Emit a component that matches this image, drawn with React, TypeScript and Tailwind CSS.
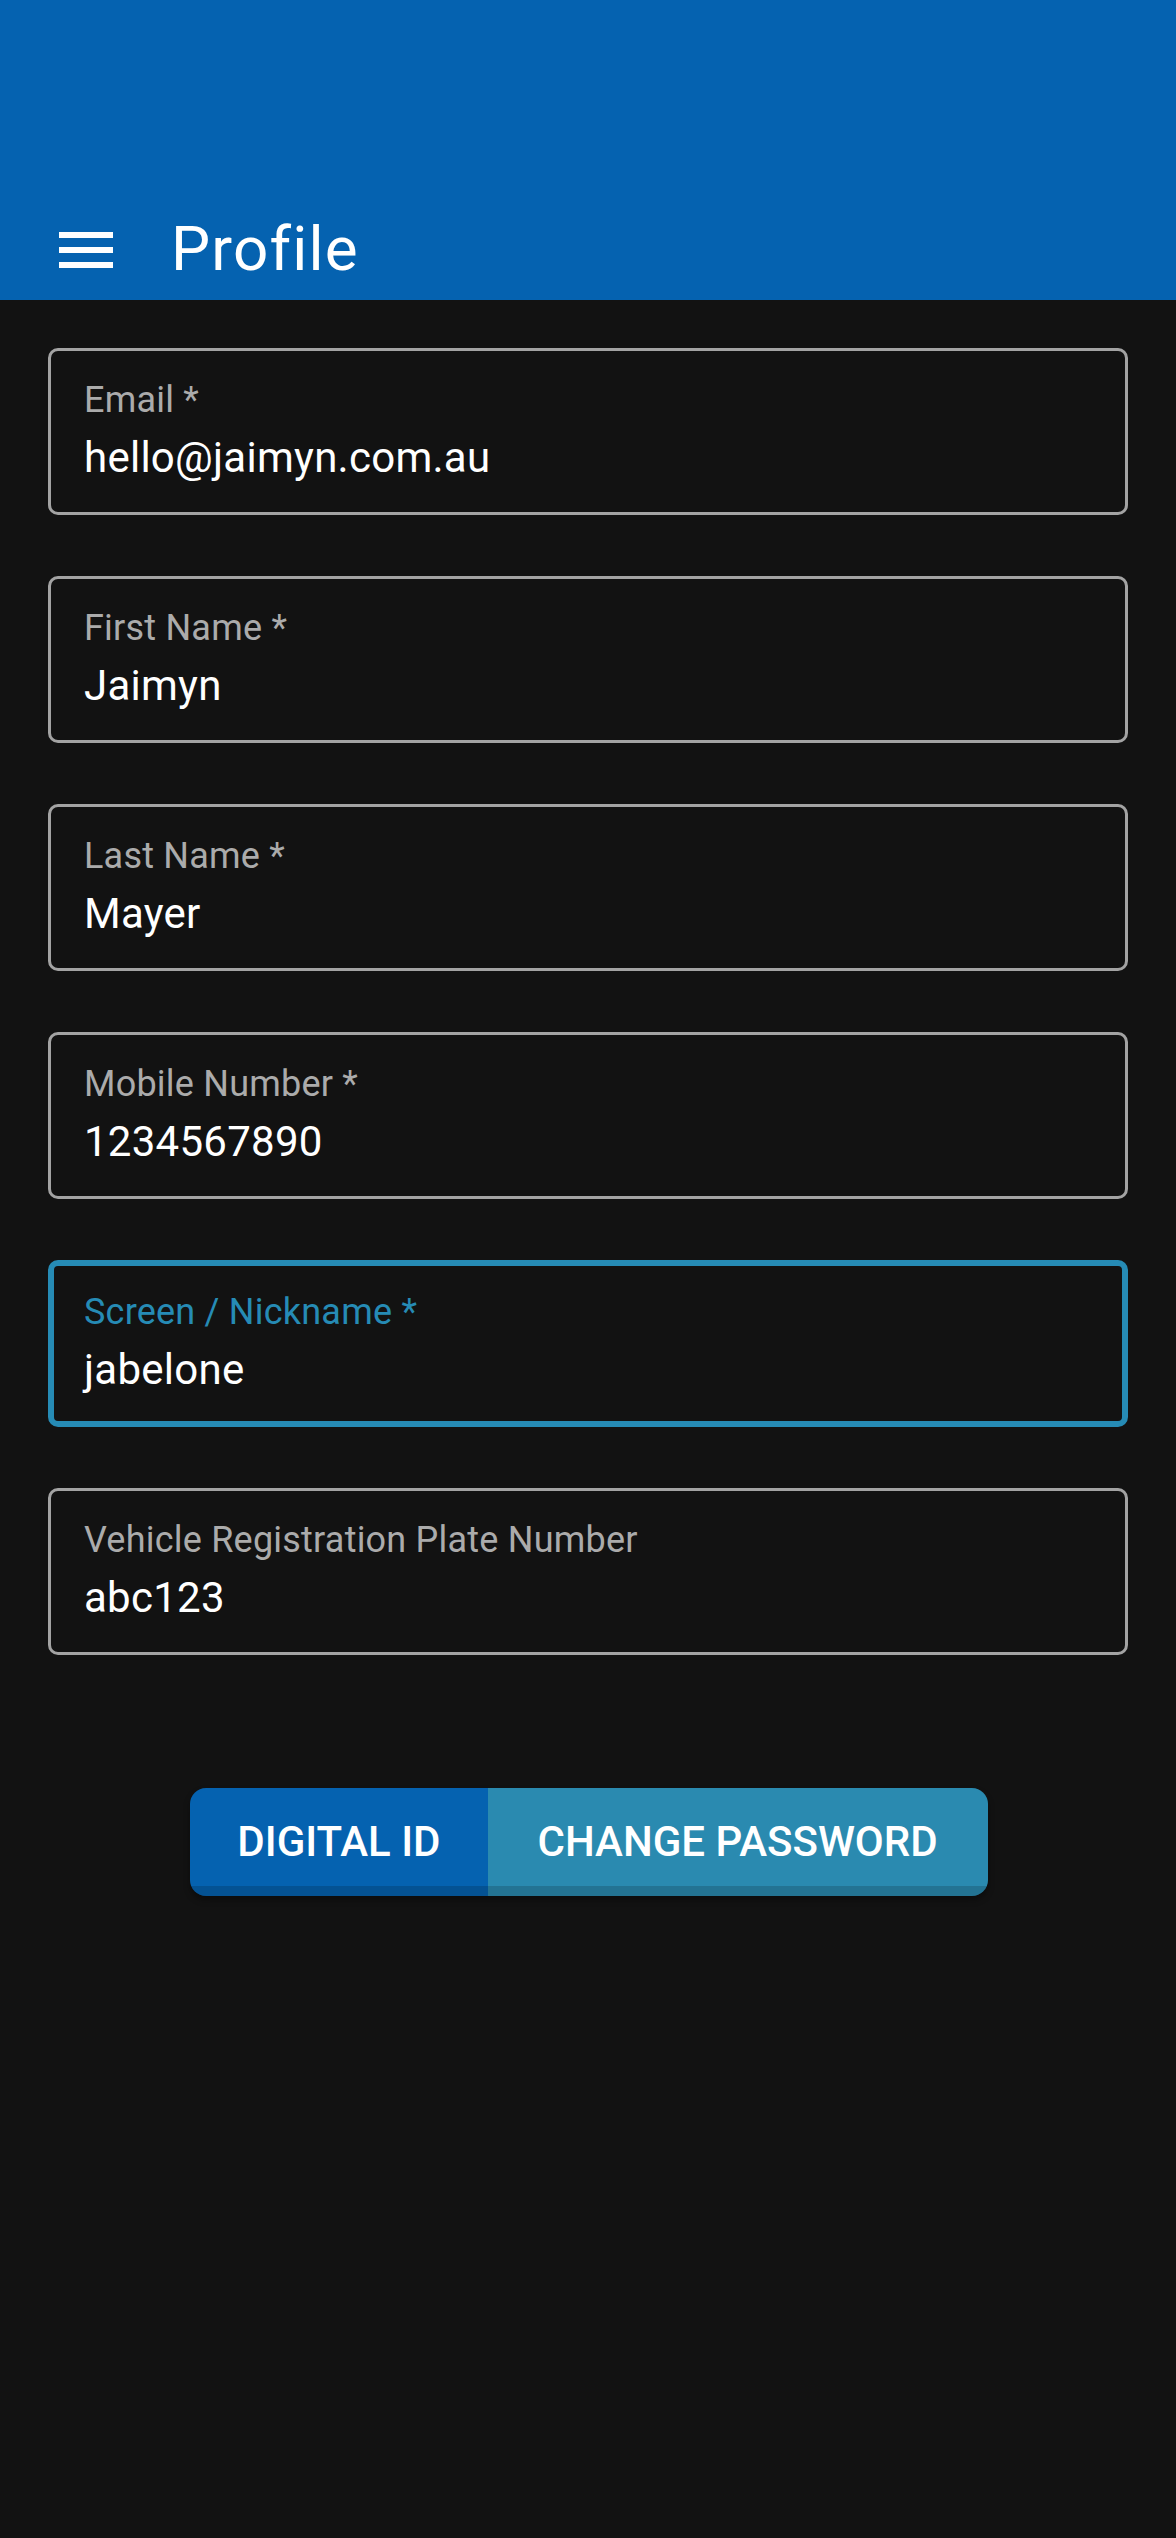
const fields = [
  { label: 'Email *', value: 'hello@jaimyn.com.au' },
  { label: 'First Name *', value: 'Jaimyn' },
  { label: 'Last Name *', value: 'Mayer' },
  { label: 'Mobile Number *', value: '1234567890' },
  { label: 'Screen / Nickname *', value: 'jabelone', focused: true },
  { label: 'Vehicle Registration Plate Number', value: 'abc123' },
]

function MenuIcon() {
  return (
    <div className="flex h-[36px] w-[54px] flex-col justify-between">
      <div className="h-[6px] w-full bg-white" />
      <div className="h-[6px] w-full bg-white" />
      <div className="h-[6px] w-full bg-white" />
    </div>
  )
}

function Field({ label, value, focused }: { label: string; value: string; focused?: boolean }) {
  return (
    <div
      className={
        focused
          ? 'h-[167px] rounded-[10px] border-[6px] border-[#268bb5] pl-[30px] pt-[28px]'
          : 'h-[167px] rounded-[10px] border-[3px] border-[#a3a3a3] pl-[33px] pt-[31px]'
      }
    >
      <div
        className={
          focused
            ? 'text-[36px] leading-none tracking-[0.22px] text-[#268bb5]'
            : 'text-[36px] leading-none tracking-[0.22px] text-[#ababab]'
        }
      >
        {label}
      </div>
      <div className="mt-[19px] text-[42px] leading-none tracking-[0.26px] text-white">{value}</div>
    </div>
  )
}

export default function App() {
  return (
    <div className="min-h-[2538px] w-full bg-[#121212] font-['Roboto',sans-serif] [font-variant-ligatures:none]">
      {/* App bar */}
      <header className="flex h-[300px] items-end bg-[#0562b0]">
        <div className="flex h-[101px] items-center pl-[59px]">
          <MenuIcon />
          <h1 className="ml-[58px] pb-[1px] text-[62px] font-normal leading-none tracking-[1.2px] text-white">
            Profile
          </h1>
        </div>
      </header>

      {/* Form */}
      <div className="flex flex-col gap-[61px] px-[48px] pt-[48px]">
        {fields.map((f) => (
          <Field key={f.label} label={f.label} value={f.value} focused={f.focused} />
        ))}
      </div>

      {/* Actions */}
      <div className="mt-[133px] flex justify-center">
        <div className="ml-[2px] flex h-[108px] overflow-hidden rounded-[16px] shadow-[0_4px_6px_rgba(0,0,0,0.35)]">
          <button className="flex h-full items-center bg-[#0562b0] px-[47px] text-[42px] font-medium leading-none text-white shadow-[inset_0_-10px_0_rgba(0,0,0,0.16)]">
            DIGITAL ID
          </button>
          <button className="flex h-full items-center bg-[#2a8ab0] px-[50px] text-[42px] font-medium leading-none text-white shadow-[inset_0_-10px_0_rgba(0,0,0,0.16)]">
            CHANGE PASSWORD
          </button>
        </div>
      </div>
    </div>
  )
}
